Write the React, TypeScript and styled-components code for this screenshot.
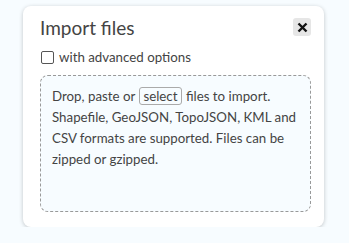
import React from "react";
import styled, { createGlobalStyle } from "styled-components";

const Global = createGlobalStyle`
  html, body {
    margin: 0;
    padding: 0;
    background: #f7fcff;
    font-family: "Source Sans Pro", Lato, "Noto Sans", sans-serif;
    color: #444;
  }
`;

const Page = styled.div`
  padding: 6px 0 0 23px;
`;

const Panel = styled.div`
  width: 301px;
  box-sizing: border-box;
  background: #fff;
  border-radius: 8px;
  box-shadow: 0 1px 4px rgba(0, 0, 0, 0.22);
  padding: 10px 13px 15px 17px;
`;

const Header = styled.div`
  display: flex;
  justify-content: space-between;
  align-items: flex-start;
`;

const Title = styled.h3`
  margin: 0;
  font-size: 19px;
  font-weight: 400;
  line-height: 24px;
  color: #444;
`;

const CloseBtn = styled.div`
  width: 18px;
  height: 18px;
  margin-top: 2px;
  border-radius: 3px;
  background: #e6e6e6;
  display: flex;
  align-items: center;
  justify-content: center;
`;

const OptionRow = styled.label`
  display: flex;
  align-items: center;
  gap: 5px;
  margin-top: 8px;
  font-size: 13.3px;
  line-height: 18px;
  color: #444;
`;

const Box = styled.span`
  width: 11px;
  height: 11px;
  border: 1px solid #555;
  border-radius: 2px;
  margin-left: 1px;
`;

const DropZone = styled.div`
  margin-top: 9px;
  height: 137px;
  box-sizing: border-box;
  border: 1px dashed #999;
  border-radius: 8px;
  background: #f7fcff;
  padding: 10px 11px;
  font-size: 13.3px;
  line-height: 21px;
  color: #444;
`;

const SelectBtn = styled.span`
  display: inline-block;
  border: 1px solid #aaa;
  border-radius: 3px;
  padding: 0 3px;
  margin: 0 1px;
  line-height: 16px;
`;

export default function App() {
  return (
    <>
      <Global />
      <Page>
        <Panel>
          <Header>
            <Title>Import files</Title>
            <CloseBtn>
              <svg width="11" height="11" viewBox="0 0 11 11">
                <path d="M1.5 1.5 L9.5 9.5 M9.5 1.5 L1.5 9.5" stroke="#111" strokeWidth="2.4" />
              </svg>
            </CloseBtn>
          </Header>
          <OptionRow>
            <Box />
            with advanced options
          </OptionRow>
          <DropZone>
            Drop, paste or <SelectBtn>select</SelectBtn> files to import. Shapefile, GeoJSON,
            TopoJSON, KML and CSV formats are supported. Files can be zipped or gzipped.
          </DropZone>
        </Panel>
      </Page>
    </>
  );
}
